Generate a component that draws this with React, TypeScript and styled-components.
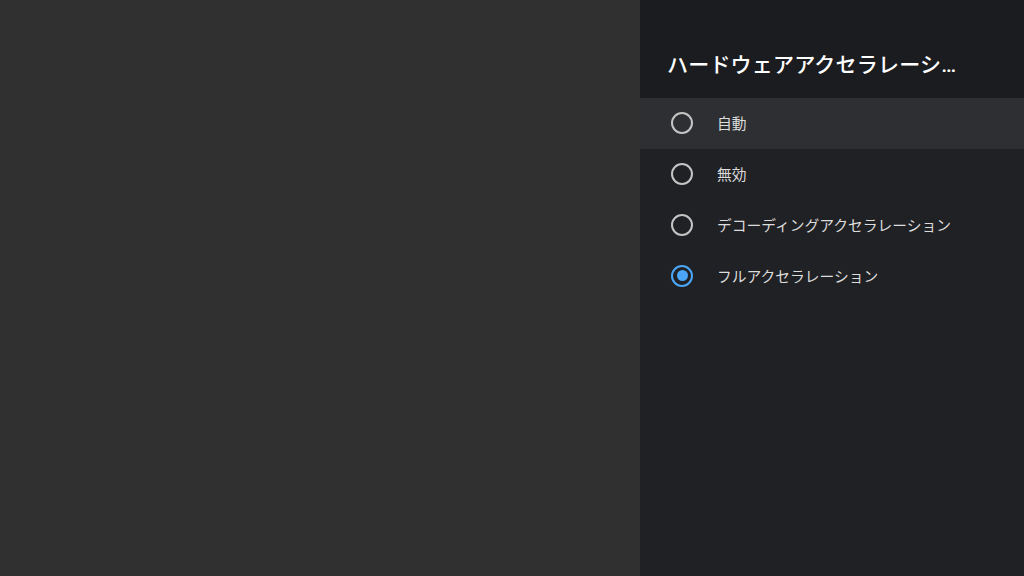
import React, { useState } from 'react';
import styled, { createGlobalStyle } from 'styled-components';

const GlobalStyle = createGlobalStyle`
  * {
    box-sizing: border-box;
  }
  html, body {
    margin: 0;
    padding: 0;
    width: 100%;
    height: 100%;
    background: #303030;
    overflow: hidden;
  }
  #root {
    height: 100%;
  }
`;

const Screen = styled.div`
  width: 1024px;
  height: 576px;
  display: flex;
  background: #303030;
  font-family: "Roboto", "Noto Sans CJK JP", sans-serif;
`;

const Backdrop = styled.div`
  flex: 1;
  background: #303030;
`;

const Panel = styled.aside`
  width: 384px;
  height: 100%;
  display: flex;
  flex-direction: column;
  background: #202124;
`;

const Header = styled.header`
  height: 98px;
  display: flex;
  align-items: center;
  padding: 27px 0 0 27px;
  background: #1b1c1f;
`;

const Title = styled.h1`
  margin: 0;
  max-width: 298px;
  font-family: "Roboto", "Noto Sans CJK JP", sans-serif;
  font-size: 21px;
  font-weight: 500;
  letter-spacing: 0.2px;
  color: #ffffff;
  white-space: nowrap;
  overflow: hidden;
  text-overflow: ellipsis;
`;

const List = styled.div`
  display: flex;
  flex-direction: column;
`;

const Row = styled.div<{ $focused: boolean }>`
  height: 51px;
  display: flex;
  align-items: center;
  gap: 24px;
  padding: 0 0 2px 31px;
  background: ${(p) => (p.$focused ? '#2e2f33' : 'transparent')};
  cursor: pointer;
`;

const Radio = styled.span<{ $checked: boolean }>`
  width: 22px;
  height: 22px;
  border-radius: 50%;
  border: 2.5px solid ${(p) => (p.$checked ? '#4ba6f8' : '#c4c4c4')};
  display: flex;
  align-items: center;
  justify-content: center;
  flex-shrink: 0;

  &::after {
    content: "";
    width: 11px;
    height: 11px;
    border-radius: 50%;
    background: #4ba6f8;
    display: ${(p) => (p.$checked ? 'block' : 'none')};
  }
`;

const Label = styled.span`
  font-family: "Noto Sans CJK JP", sans-serif;
  font-size: 14.75px;
  color: #dcdcdc;
  white-space: nowrap;
`;

const options = [
  '自動',
  '無効',
  'デコーディングアクセラレーション',
  'フルアクセラレーション',
];

export default function App() {
  const [selected, setSelected] = useState(3);
  const focused = 0;

  return (
    <>
      <GlobalStyle />
      <Screen>
        <Backdrop />
        <Panel>
          <Header>
            <Title>ハードウェアアクセラレーション</Title>
          </Header>
          <List>
            {options.map((label, i) => (
              <Row key={label} $focused={i === focused} onClick={() => setSelected(i)}>
                <Radio $checked={i === selected} />
                <Label>{label}</Label>
              </Row>
            ))}
          </List>
        </Panel>
      </Screen>
    </>
  );
}
